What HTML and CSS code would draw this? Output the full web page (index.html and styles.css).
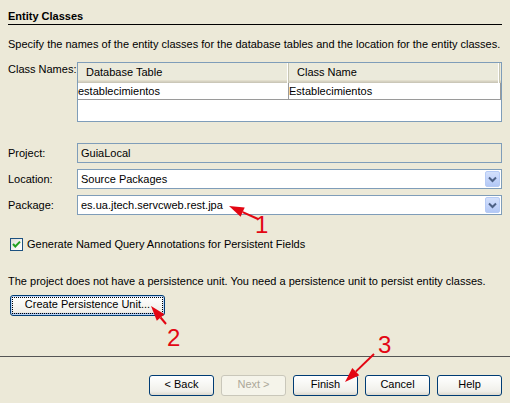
FILE: index.html
```html
<!DOCTYPE html>
<html>
<head>
<meta charset="utf-8">
<title>Entity Classes</title>
<link rel="stylesheet" href="styles.css">
</head>
<body>
<div class="page">
  <div class="content">
    <h1 class="title">Entity Classes</h1>
    <p class="desc">Specify the names of the entity classes for the database tables and the location for the entity classes.</p>

    <div class="row row-table">
      <div class="label">Class Names:</div>
      <div class="table">
        <div class="thead">
          <div class="th">Database Table</div>
          <div class="th">Class Name</div>
        </div>
        <div class="tr">
          <div class="td td1">establecimientos</div>
          <div class="td td2">Establecimientos</div>
        </div>
      </div>
    </div>

    <div class="fields">
      <div class="row">
        <div class="label">Project:</div>
        <div class="field disabled"><span class="val">GuiaLocal</span></div>
      </div>
      <div class="row">
        <div class="label">Location:</div>
        <div class="field">
          <span class="val">Source Packages</span>
          <span class="drop"><svg width="15" height="16" viewBox="0 0 15 16"><polyline points="4,6.5 7.5,10 11,6.5" fill="none" stroke="#4D6185" stroke-width="2"/></svg></span>
        </div>
      </div>
      <div class="row">
        <div class="label">Package:</div>
        <div class="field">
          <span class="val">es.ua.jtech.servcweb.rest.jpa</span>
          <span class="drop"><svg width="15" height="16" viewBox="0 0 15 16"><polyline points="4,6.5 7.5,10 11,6.5" fill="none" stroke="#4D6185" stroke-width="2"/></svg></span>
        </div>
      </div>
    </div>

    <div class="check">
      <span class="box"><svg width="11" height="11" viewBox="0 0 11 11"><polyline points="2,5 4.3,7.5 9,2.6" fill="none" stroke="#21A121" stroke-width="2"/></svg></span>
      <span class="check-label">Generate Named Query Annotations for Persistent Fields</span>
    </div>

    <p class="info">The project does not have a persistence unit. You need a persistence unit to persist entity classes.</p>

    <button class="btn btn-wide focused"><span class="btn-in">Create Persistence Unit...</span></button>
  </div>

  <div class="footer">
    <button class="btn"><span class="btn-in">&lt; Back</span></button>
    <button class="btn disabled-btn"><span class="btn-in">Next &gt;</span></button>
    <button class="btn"><span class="btn-in">Finish</span></button>
    <button class="btn"><span class="btn-in">Cancel</span></button>
    <button class="btn"><span class="btn-in">Help</span></button>
  </div>

  <svg class="arrows" width="510" height="403" viewBox="0 0 510 403">
    <g fill="#E30613" stroke="#E30613">
      <line x1="242.7" y1="212.1" x2="258" y2="219" stroke-width="2"/>
      <polygon points="229,206 244.7,207.6 240.6,216.7" stroke="none"/>
      <line x1="160.6" y1="317.5" x2="166" y2="324" stroke-width="2"/>
      <polygon points="151,306 164.4,314.3 156.8,320.7" stroke="none"/>
      <line x1="355.8" y1="371.6" x2="374" y2="354" stroke-width="2"/>
      <polygon points="345,382 359.3,375.2 352.3,368" stroke="none"/>
    </g>
  </svg>
  <span class="num num1">1</span>
  <span class="num num2">2</span>
  <span class="num num3">3</span>
</div>
</body>
</html>
```

FILE: styles.css
```css
html, body {
  margin: 0;
  padding: 0;
  background: #ECE9D8;
}

.page {
  position: relative;
  width: 510px;
  height: 403px;
  display: flex;
  flex-direction: column;
  font-family: "Liberation Sans", Arial, sans-serif;
  font-size: 11px;
  color: #000;
  overflow: hidden;
}

.content {
  padding: 0 8px;
}

.title {
  margin: 0;
  padding: 9px 0 1px 0;
  font-size: 11px;
  font-weight: bold;
  line-height: 14px;
  border-bottom: 1px solid #000;
}

.desc {
  margin: 12px 0 0 0;
  line-height: 14px;
}

.row {
  display: flex;
  align-items: center;
}

.row-table {
  align-items: flex-start;
  margin-top: 11px;
}

.label {
  width: 69px;
  flex: none;
  line-height: 14px;
}

.table {
  width: 425px;
  height: 60px;
  box-sizing: border-box;
  border: 1px solid #7F9DB9;
  background: #fff;
}

.thead {
  display: flex;
  height: 20px;
  background: #EBEADB;
  box-shadow: inset 0 -1px #CBC7B8, inset 0 -2px #D6D2C2, inset 0 -3px #E2DECD;
}

.th {
  width: 211px;
  box-sizing: border-box;
  padding-left: 8px;
  line-height: 19px;
  border-right: 1px solid #C7C5B2;
  box-shadow: inset -1px 0 #fff;
}

.tr {
  display: flex;
  height: 17px;
}

.td {
  box-sizing: border-box;
  line-height: 16px;
  border-bottom: 1px solid #9A9A9A;
  border-right: 1px solid #9A9A9A;
  padding-left: 0;
}

.td1 { width: 211px; }
.td2 { width: 212px; }

.fields {
  margin-top: 21px;
  display: flex;
  flex-direction: column;
  gap: 6px;
}

.field {
  flex: 1;
  height: 20px;
  box-sizing: border-box;
  border: 1px solid #7F9DB9;
  background: #fff;
  display: flex;
  align-items: center;
  padding: 0 1px 0 3px;
}

.field.disabled {
  background: #ECE9D8;
}

.val {
  flex: 1;
  line-height: 18px;
}

.drop {
  width: 15px;
  height: 16px;
  box-sizing: border-box;
  border: 1px solid #B6CBF5;
  border-radius: 2px;
  background: linear-gradient(to bottom, #D3E0FB 0%, #C4D5FB 50%, #B3C8F5 100%);
  display: flex;
  align-items: center;
  justify-content: center;
}

.drop svg {
  display: block;
  flex: none;
  margin: -1px;
}

.check {
  margin-top: 23px;
  padding-left: 2px;
  display: flex;
  align-items: center;
  gap: 4px;
  height: 13px;
}

.box {
  width: 13px;
  height: 13px;
  box-sizing: border-box;
  border: 1px solid #1C5180;
  background: linear-gradient(135deg, #DCDCD7 0%, #F6F6F4 60%, #FFFFFF 100%);
  display: flex;
  align-items: center;
  justify-content: center;
}

.box svg {
  display: block;
}

.check-label {
  line-height: 13px;
}

.info {
  margin: 23px 0 0 0;
  line-height: 14px;
}

.btn {
  font: inherit;
  color: #000;
  margin: 0;
  padding: 1px;
  width: 65px;
  height: 21px;
  box-sizing: border-box;
  border: 1px solid #003C74;
  border-radius: 3px;
  background: linear-gradient(to bottom, #FFFFFF 0%, #F8F8F5 40%, #F0EFEA 80%, #DDD9CF 100%);
  display: flex;
  cursor: default;
}

.btn-in {
  flex: 1;
  box-sizing: border-box;
  border: 1px solid transparent;
  line-height: 13px;
  padding-bottom: 2px;
  text-align: center;
  white-space: nowrap;
}

.btn-wide {
  width: 155px;
  margin: 7px 0 0 2px;
}

.focused {
  box-shadow: inset 0 0 0 1px #BCD4F6, inset 0 -1px 0 1px #89ADE4;
}

.focused .btn-in {
  border: 1px dotted #000;
}

.disabled-btn {
  border-color: #C9C7BA;
  background: #F5F4EA;
  color: #ACA899;
}

.footer {
  margin-top: auto;
  height: 47px;
  box-sizing: border-box;
  border-top: 1px solid #555555;
  padding: 18px 8px 7px 0;
  display: flex;
  justify-content: flex-end;
  gap: 7px;
}

.arrows {
  position: absolute;
  left: 0;
  top: 0;
  pointer-events: none;
}

.num {
  position: absolute;
  font-family: "Liberation Sans", Arial, sans-serif;
  font-size: 24px;
  line-height: 24px;
  color: #E30613;
}

.num1 { left: 255px; top: 213px; }
.num2 { left: 167px; top: 326px; }
.num3 { left: 378px; top: 333px; }
```
